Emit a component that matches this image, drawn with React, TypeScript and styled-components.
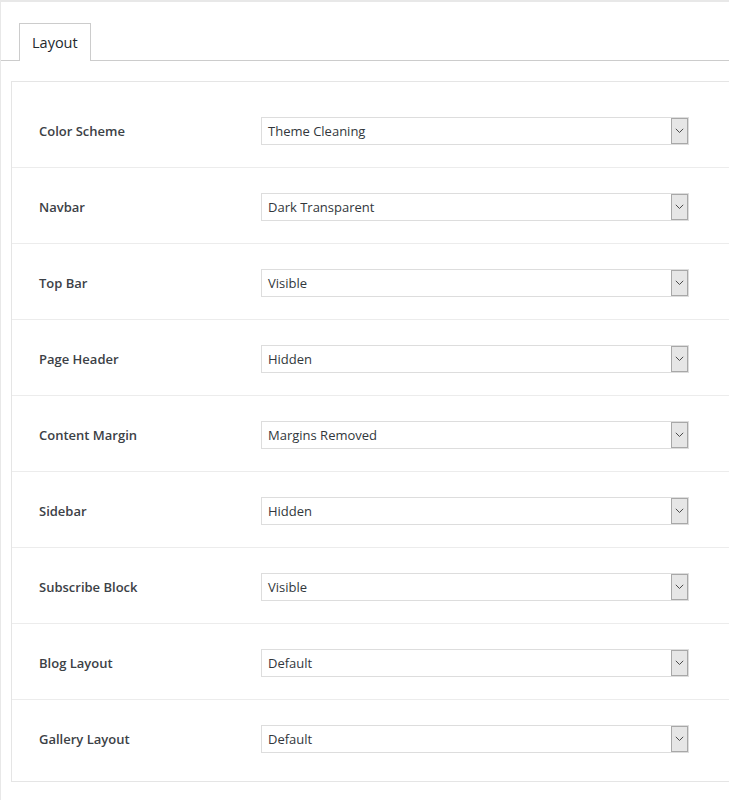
import React from 'react';
import styled, { createGlobalStyle } from 'styled-components';

const GlobalStyle = createGlobalStyle`
  html, body {
    margin: 0;
    padding: 0;
    background: #fff;
  }
  body {
    font-family: "Open Sans", "Noto Sans", "Liberation Sans", sans-serif;
    color: #23282d;
  }
`;

const Page = styled.div`
  border-top: 2px solid #e8e8e8;
  border-left: 1px solid #e8e8e8;
  min-height: 800px;
  box-sizing: border-box;
`;

const TabBar = styled.div`
  display: flex;
  padding: 21px 0 0 18px;
  border-bottom: 1px solid #cccccc;
`;

const Tab = styled.div`
  height: 36px;
  padding: 0 12px 1px;
  display: flex;
  align-items: center;
  border: 1px solid #cccccc;
  border-bottom: none;
  background: #fff;
  margin-bottom: -1px;
  font-size: 14.5px;
  color: #23282d;
`;

const Panel = styled.div`
  margin: 20px 0 0 10px;
  border: 1px solid #e5e5e5;
  border-right: none;
  padding: 10px 0 6px;
`;

const Row = styled.div<{ $last?: boolean }>`
  display: grid;
  grid-template-columns: 222px 428px;
  align-items: center;
  padding: 25px 0 22px 27px;
  border-bottom: ${({ $last }) => ($last ? 'none' : '1px solid #ececec')};
`;

const Label = styled.div`
  font-size: 13px;
  font-weight: 600;
  color: #3c4146;
`;

const Select = styled.div`
  height: 28px;
  box-sizing: border-box;
  border: 1px solid #dddddd;
  display: flex;
  align-items: center;
  justify-content: space-between;
  padding-left: 6px;
  font-size: 13px;
  color: #32373c;
  background: #fff;
`;

const Arrow = styled.div`
  width: 17px;
  height: 26px;
  box-sizing: border-box;
  border: 1px solid #a8a8a8;
  background: #e6e6e6;
  display: flex;
  align-items: center;
  justify-content: center;
`;

const fields = [
  ['Color Scheme', 'Theme Cleaning'],
  ['Navbar', 'Dark Transparent'],
  ['Top Bar', 'Visible'],
  ['Page Header', 'Hidden'],
  ['Content Margin', 'Margins Removed'],
  ['Sidebar', 'Hidden'],
  ['Subscribe Block', 'Visible'],
  ['Blog Layout', 'Default'],
  ['Gallery Layout', 'Default'],
];

const App = () => {
  return (
    <>
      <GlobalStyle />
      <Page>
        <TabBar>
          <Tab>Layout</Tab>
        </TabBar>
        <Panel>
          {fields.map(([label, value], i) => (
            <Row key={label} $last={i === fields.length - 1}>
              <Label>{label}</Label>
              <Select>
                <span>{value}</span>
                <Arrow>
                  <svg width="9" height="6" viewBox="0 0 9 6">
                    <path d="M0.8 0.8 L4.5 4.5 L8.2 0.8" fill="none" stroke="#4a4a4a" strokeWidth="1" />
                  </svg>
                </Arrow>
              </Select>
            </Row>
          ))}
        </Panel>
      </Page>
    </>
  );
};

export default App;
